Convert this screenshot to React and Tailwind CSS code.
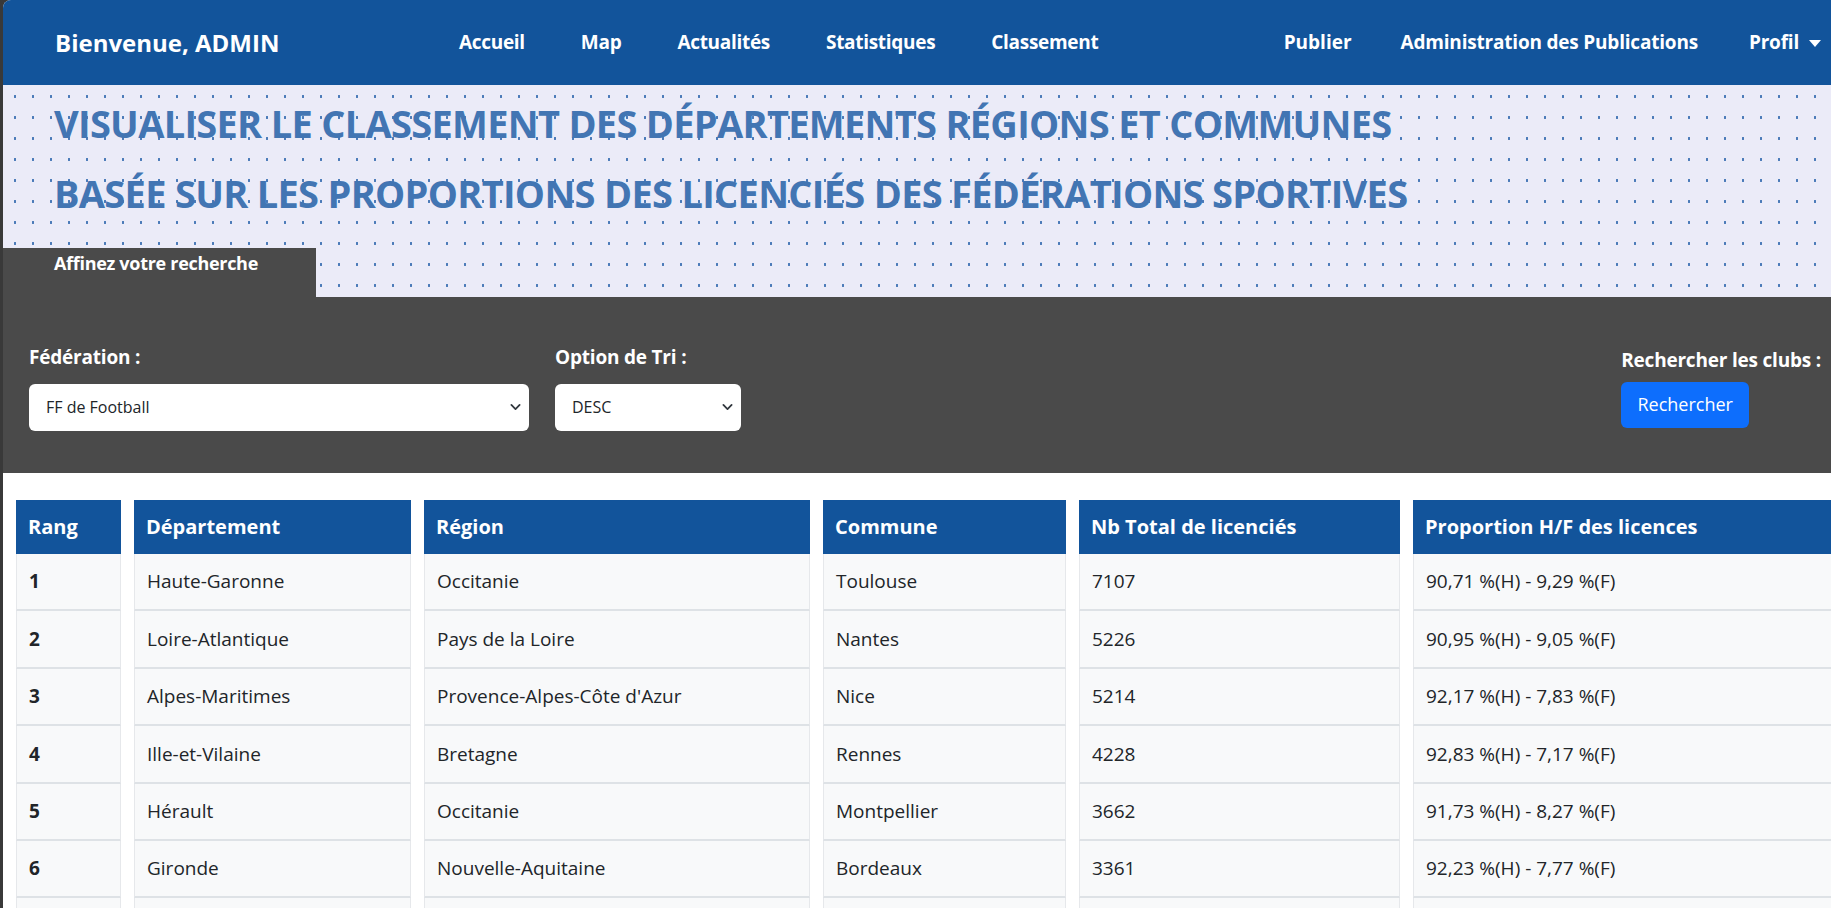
import React from "react";

const rows = [
  ["1", "Haute-Garonne", "Occitanie", "Toulouse", "7107", "90,71 %(H) - 9,29 %(F)"],
  ["2", "Loire-Atlantique", "Pays de la Loire", "Nantes", "5226", "90,95 %(H) - 9,05 %(F)"],
  ["3", "Alpes-Maritimes", "Provence-Alpes-Côte d'Azur", "Nice", "5214", "92,17 %(H) - 7,83 %(F)"],
  ["4", "Ille-et-Vilaine", "Bretagne", "Rennes", "4228", "92,83 %(H) - 7,17 %(F)"],
  ["5", "Hérault", "Occitanie", "Montpellier", "3662", "91,73 %(H) - 8,27 %(F)"],
  ["6", "Gironde", "Nouvelle-Aquitaine", "Bordeaux", "3361", "92,23 %(H) - 7,77 %(F)"],
  ["7", "Bouches-du-Rhône", "Provence-Alpes-Côte d'Azur", "Marseille", "3290", "91,12 %(H) - 8,88 %(F)"],
];

const headers = [
  ["Rang", "w-[105px]"],
  ["Département", "w-[277px]"],
  ["Région", "w-[386px]"],
  ["Commune", "w-[243px]"],
  ["Nb Total de licenciés", "w-[321px]"],
  ["Proportion H/F des licences", "w-[480px]"],
];

const leftLinks = ["Accueil", "Map", "Actualités", "Statistiques", "Classement"];

const Chevron = () => (
  <svg className="pointer-events-none absolute right-[8px] top-1/2 -translate-y-1/2" width="11" height="11" viewBox="0 0 16 16">
    <path d="M2 5l6 6 6-6" fill="none" stroke="#343a40" strokeWidth="2.6" strokeLinecap="round" strokeLinejoin="round" />
  </svg>
);

const App = () => {
  return (
    <div className="h-[908px] w-[1831px] overflow-hidden bg-[#393939] font-['Open_Sans',sans-serif]">
      <div className="ml-[3px] h-full overflow-hidden rounded-tl-[8px] bg-white">
        {/* Navbar */}
        <nav className="flex h-[85px] items-center bg-[#12549b] text-white">
          <div className="w-[428px] pl-[52px] text-[24px] font-bold">Bienvenue, ADMIN</div>
          <ul className="flex">
            {leftLinks.map((l) => (
              <li key={l} className="px-[28px] text-[19px] font-bold tracking-[-0.3px]">
                {l}
              </li>
            ))}
          </ul>
          <ul className="ml-auto flex items-center">
            <li className="pl-[24px] pr-[25px] text-[19px] font-bold">Publier</li>
            <li className="pl-[24px] pr-[26px] text-[19px] font-bold tracking-[-0.2px]">Administration des Publications</li>
            <li className="flex items-center gap-[10px] pl-[25px] pr-[10px] text-[19px] font-bold tracking-[-0.2px]">
              Profil
              <span className="mt-[2px] h-0 w-0 border-x-[6px] border-t-[7px] border-x-transparent border-t-white" />
            </li>
          </ul>
        </nav>

        {/* Hero */}
        <div className="bg-[#ebebf8] bg-[radial-gradient(circle,#4a7ab8_1.1px,transparent_1.5px)] bg-[length:18px_21px] bg-[position:3px_1px]">
          <div className="pl-[51px] pt-[3px] text-[#4275b3]">
            <h2 className="text-[38px] font-bold leading-[70px] tracking-[-0.7px]">
              VISUALISER LE CLASSEMENT DES DÉPARTEMENTS RÉGIONS ET COMMUNES
            </h2>
            <h2 className="text-[38px] font-bold leading-[70px] tracking-[-0.7px]">
              BASÉE SUR LES PROPORTIONS DES LICENCIÉS DES FÉDÉRATIONS SPORTIVES
            </h2>
          </div>
          <div className="mt-[20px] flex">
            <div className="h-[49px] w-[313px] bg-[#4a4a4a] pl-[51px] pt-[2px] text-[18px] font-bold tracking-[-0.3px] text-white">
              Affinez votre recherche
            </div>
          </div>
        </div>

        {/* Filters */}
        <div className="flex h-[176px] items-start bg-[#4a4a4a] pl-[26px] pr-[10px] pt-[46px] text-white">
          <div className="flex gap-[26px]">
            <div className="flex flex-col">
              <label className="text-[19px] font-bold tracking-[-0.2px]">Fédération :</label>
              <div className="relative mt-[12px]">
                <select className="h-[47px] w-[500px] appearance-none rounded-[6px] bg-white pl-[17px] text-[16px] text-[#212529] outline-none">
                  <option>FF de Football</option>
                </select>
                <Chevron />
              </div>
            </div>
            <div className="flex flex-col">
              <label className="text-[19px] font-bold tracking-[-0.2px]">Option de Tri :</label>
              <div className="relative mt-[12px]">
                <select className="h-[47px] w-[186px] appearance-none rounded-[6px] bg-white pl-[17px] text-[16px] text-[#212529] outline-none">
                  <option>DESC</option>
                </select>
                <Chevron />
              </div>
            </div>
          </div>
          <div className="ml-auto flex flex-col pt-[3px]">
            <label className="whitespace-nowrap text-[19px] font-bold tracking-[-0.2px]">Rechercher les clubs :</label>
            <button className="mt-[7px] h-[46px] w-[128px] rounded-[6px] bg-[#0d6efd] text-[18px] text-white">
              Rechercher
            </button>
          </div>
        </div>

        {/* Table */}
        <div className="pt-[27px]">
          <table className="w-[1903px] table-fixed border-separate border-spacing-x-[13px] border-spacing-y-0 text-left">
            <thead>
              <tr>
                {headers.map(([h, w]) => (
                  <th
                    key={h}
                    className={`${w} h-[54px] bg-[#12549b] px-[12px] text-[20px] font-bold whitespace-nowrap text-white`}
                  >
                    {h}
                  </th>
                ))}
              </tr>
            </thead>
            <tbody>
              {rows.map((r) => (
                <tr key={r[0]}>
                  {r.map((c, i) => (
                    <td
                      key={i}
                      className={`h-[57.4px] border-x border-b-2 border-x-[#e6e8eb] border-b-[#dee2e6] bg-[#f8f9fa] px-[12px] text-[19px] whitespace-nowrap text-[#212529] ${
                        i === 0 ? "font-bold" : ""
                      }`}
                    >
                      {c}
                    </td>
                  ))}
                </tr>
              ))}
            </tbody>
          </table>
        </div>
      </div>
    </div>
  );
};

export default App;
